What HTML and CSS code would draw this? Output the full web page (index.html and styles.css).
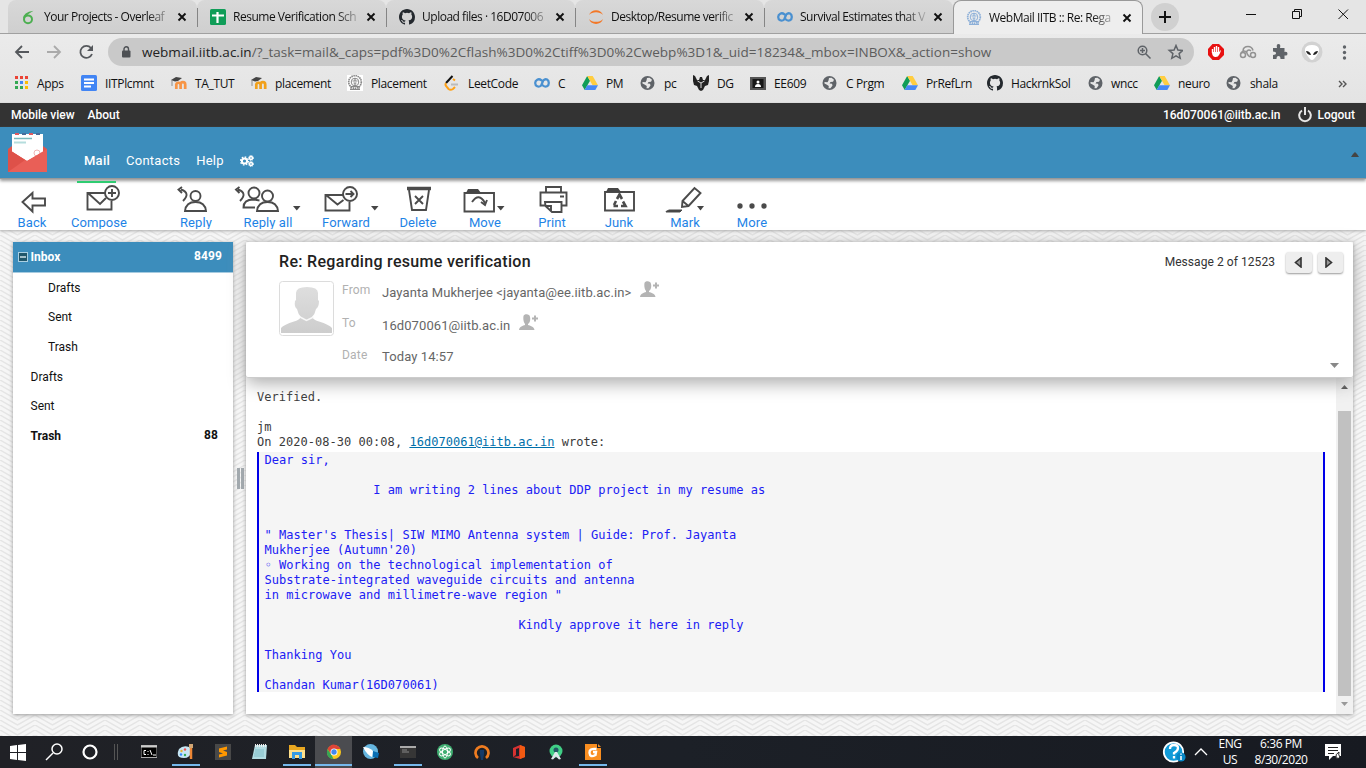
FILE: index.html
```html
<!DOCTYPE html>
<html lang="en">
<head>
<meta charset="utf-8">
<title>WebMail IITB :: Re: Regarding resume verification</title>
<link rel="stylesheet" href="styles.css">
</head>
<body>
<svg class="defs" width="0" height="0">
  <symbol id="close" viewBox="0 0 10 10"><path d="M1.500 1.500l7 7M8.500 1.500l-7 7" stroke="#111" stroke-width="1.900"/></symbol>
  <symbol id="github" viewBox="0 0 16 16"><path fill="#24292e" d="M8 0C3.580 0 0 3.580 0 8c0 3.540 2.290 6.530 5.470 7.590.4.070.55-.17.55-.38v-1.490c-2.010.37-2.530-.49-2.690-.94-.09-.23-.48-.94-.82-1.130-.28-.15-.68-.52-.01-.53.63-.01 1.080.58 1.230.82.72 1.210 1.870.87 2.330.66.070-.52.28-.87.51-1.070-1.780-.2-3.640-.89-3.640-3.950 0-.87.31-1.590.82-2.150-.08-.2-.36-1.020.08-2.120 0 0 .67-.21 2.200.82a7.600 7.600 0 0 1 4 0c1.530-1.040 2.200-.82 2.200-.82.44 1.100.16 1.920.08 2.120.51.56.82 1.270.82 2.150 0 3.070-1.870 3.750-3.650 3.950.29.25.54.73.54 1.480v2.200c0 .21.15.46.55.38A8 8 0 0 0 16 8c0-4.420-3.580-8-8-8z"/></symbol>
  <symbol id="loop" viewBox="0 0 16 10"><path d="M9 3.500L7.500 2.300C4.500 0 1.200 2 1.200 5s3.300 5 6 2.500l2-5C12-.3 14.800 2 14.800 5s-3 5-5.800 2.500L7.500 6.500" fill="none" stroke="#4a90d0" stroke-width="2.300"/></symbol>
  <symbol id="drive" viewBox="0 0 16 14"><path fill="#109d58" d="M5.200 0L0 9.200 2.700 14 8 4.700z"/><path fill="#ffcd40" d="M5.200 0h5.500L16 9.200h-5.400z"/><path fill="#4688f4" d="M5.300 9.200H16L13.300 14H2.600z"/></symbol>
  <symbol id="globe" viewBox="0 0 14 14"><circle cx="7" cy="7" r="7" fill="#5f6368"/><path d="M6.500 2L9 1.700l2.500 2-1 2-2.500.3-1 1.500 2.500.2.500 1.800-2 2.700H6l.3-2.200L4 8.500 2 7.500V6l3 .3L6 4.500z" fill="#e6e6e6"/></symbol>
  <symbol id="crest" viewBox="0 0 16 16"><g fill="none" stroke="currentColor"><circle cx="8" cy="7" r="6.300" stroke-width="1.700" stroke-dasharray="1.500 .6"/><circle cx="8" cy="7" r="3.800"/><path d="M8 3v3M5.500 6h5M6.500 8h3M8 8v4M3.500 11.500h9M3 14.500h10M4 12v3M12 12v3" stroke-width="1.200"/></g></symbol>
  <symbol id="moodle" viewBox="0 0 16 14"><path d="M5.300 13V8.500a2.200 2.200 0 0 1 4.300 0V13M9.600 8.500a2.200 2.200 0 0 1 4.600 0V13" fill="none" stroke="currentColor" stroke-width="2.700"/><path d="M0 4l5-3 6 1-4 3-3 .5z" fill="#444"/><path d="M1 4v6" stroke="#777" stroke-width=".8"/></symbol>
  <symbol id="person" viewBox="0 0 20 17"><g fill="#b4b4b4"><path d="M4.500 2C5-.5 11-.5 11 3c.8 3-.5 6-2 7v1c2 .7 6 1.500 6.500 5H0c.5-3.500 4-4.300 6-5v-1C4.500 8 4 5 4.500 2z"/><path d="M15 1.500h2v2h2v2h-2v2h-2v-2h-2v-2h2z"/></g></symbol>
</svg>

<header class="browser">
  <div class="tabs">
    <div class="tab"><svg width="16" height="16" viewBox="0 0 16 16"><ellipse cx="7" cy="10.300" rx="4" ry="3.900" fill="none" stroke="#4caf50" stroke-width="2"/><path d="M2.200 9.500Q2 3.500 12.500 1.800 7.500 4.500 4.500 8" fill="#4caf50"/></svg><span>Your Projects - Overleaf</span><svg width="10" height="10"><use href="#close"/></svg></div>
    <div class="tab"><svg width="16" height="16"><rect width="16" height="16" rx="1.500" fill="#109d58"/><path d="M7.500 3v11M2 6.500h12" stroke="#fff" stroke-width="2.200"/></svg><span>Resume Verification Sch</span><svg width="10" height="10"><use href="#close"/></svg></div>
    <div class="tab"><svg width="16" height="16"><use href="#github"/></svg><span>Upload files · 16D07006</span><svg width="10" height="10"><use href="#close"/></svg></div>
    <div class="tab"><svg width="16" height="16" viewBox="0 0 16 16"><path d="M1 6C3-.5 13-.5 15 6 12 2.200 4 2.200 1 6zM1 10c2 6.500 12 6.500 14 0-3 3.800-11 3.800-14 0z" fill="#f37726"/></svg><span>Desktop/Resume verific</span><svg width="10" height="10"><use href="#close"/></svg></div>
    <div class="tab"><svg width="16" height="10"><use href="#loop"/></svg><span>Survival Estimates that V</span><svg width="10" height="10"><use href="#close"/></svg></div>
    <div class="tab active"><svg class="blue-crest" width="16" height="16"><use href="#crest"/></svg><span>WebMail IITB :: Re: Rega</span><svg width="10" height="10"><use href="#close"/></svg></div>
    <div class="newtab"><svg width="12" height="12"><path d="M6 0v12M0 6h12" stroke="#111" stroke-width="2"/></svg></div>
    <svg class="winctl" width="106" height="20" viewBox="1246 5 106 20" fill="none" stroke="#111" stroke-width="1"><path d="M1246 14.500h10M1292.500 11.500h7v7h-7zM1294.500 11v-1.500h7v7h-2M1338.500 9.500l9.500 9.500M1348 9.500l-9.500 9.500"/></svg>
  </div>
  <div class="navbar">
    <svg width="86" height="20" viewBox="10 42 86 20" fill="none" stroke-width="1.800"><path d="M29 52H16M22 46l-6 6 6 6" stroke="#55585c"/><path d="M47 52h13M54 46l6 6-6 6" stroke="#aaa"/><path d="M91 48a6 6 0 1 0 1 6" stroke="#55585c"/><path d="M93 45v6h-6z" fill="#55585c"/></svg>
    <div class="url"><svg width="9" height="12" viewBox="0 0 9 12"><rect y="4.500" width="8.500" height="7" rx="1" fill="#4d5054"/><path d="M2 5V3a2.200 2.200 0 0 1 4.500 0v2" fill="none" stroke="#4d5054" stroke-width="1.400"/></svg>
      <span class="address"><b>webmail.iitb.ac.in</b>/?_task=mail&amp;_caps=pdf%3D0%2Cflash%3D0%2Ctiff%3D0%2Cwebp%3D1&amp;_uid=18234&amp;_mbox=INBOX&amp;_action=show</span>
      <svg width="46" height="16" viewBox="1137 44 46 16" fill="none" stroke="#5f6368" stroke-width="1.500"><circle cx="1142.500" cy="50.500" r="4.300"/><path d="M1145.500 53.500l5 5M1140 50.500h5M1142.500 48v5"/><path d="M1176 45.500l1.900 4.500 4.900.4-3.700 3.200 1.100 4.700-4.200-2.500-4.200 2.500 1.100-4.700-3.700-3.200 4.900-.4z"/></svg></div>
    <svg class="exts" width="148" height="24" viewBox="1206 40 148 24"><path d="M1212.500 44h6.500l5 5v6l-5 5h-6.500l-4.500-5v-6z" fill="#e81010"/><path d="M1212.500 53v-4M1214.500 52v-5M1216.500 52v-6M1218.500 52v-5" stroke="#fff" stroke-width="1.400"/><path d="M1212 52h7.300l1-2q1.200.5-1 4.500-1.300 3-4.300 2.500-3-.5-3-5z" fill="#fff"/><g fill="none" stroke="#929292" stroke-width="1.500"><circle cx="1243" cy="55" r="2.500"/><circle cx="1253" cy="55" r="2.500"/><path d="M1243 50.500q.5-4 5-4 4 0 5 4M1250 57q-4-3-3-6 2-2 4 0M1241 53q3-4 6 0"/></g><path d="M1273 48h4q-1-4 1.500-4t1.500 4h4.500v4q3-.7 3 1.700t-3 1.700V59h-4q0-3-2-3t-2 3h-3.500v-4q3 0 3-1.700t-3-1.700z" fill="#5f6368"/><circle cx="1312" cy="52" r="10.500" fill="#d2d2d2"/><path d="M1305 49q1-4 7-4t7 4q1 3-5 10-2 2-4 0-6-7-5-10z" fill="#fff"/><path d="M1306 51q4 0 5 4-4 0-5-4zM1318 51q-4 0-5 4 4 0 5-4z" fill="#222"/><g fill="#5f6368"><circle cx="1344.500" cy="47" r="1.700"/><circle cx="1344.500" cy="52.500" r="1.700"/><circle cx="1344.500" cy="58" r="1.700"/></g></svg>
  </div>
  <nav class="bookmarks">
    <a><svg width="14" height="14" viewBox="0 0 14 14"><path d="M0 1.500h3m2 0h3m2 0h3" stroke="#ea4335" stroke-width="3"/><path d="M0 6.500h3" stroke="#34a853" stroke-width="3"/><path d="M5 6.500h3" stroke="#4285f4" stroke-width="3"/><path d="M10 6.500h3" stroke="#fbbc05" stroke-width="3"/><path d="M0 11.500h3m2 0h3" stroke="#34a853" stroke-width="3"/><path d="M10 11.500h3" stroke="#fbbc05" stroke-width="3"/></svg><span>Apps</span></a>
    <a><svg width="16" height="16"><rect width="16" height="16" rx="1.500" fill="#4285f4"/><path d="M3 4.500h10M3 8h10M3 11.500h7" stroke="#fff" stroke-width="1.800"/></svg><span>IITPlcmnt</span></a>
    <a><svg class="orange" width="16" height="14"><use href="#moodle"/></svg><span>TA_TUT</span></a>
    <a><svg class="gold" width="16" height="14"><use href="#moodle"/></svg><span>placement</span></a>
    <a><svg class="grey-crest" width="16" height="16"><use href="#crest"/></svg><span>Placement</span></a>
    <a><svg width="16" height="16" viewBox="0 0 16 16" fill="none" stroke-width="2"><path d="M8.500 1L2 8" stroke="#111"/><path d="M2 8q-1 1.500 0 3l2.500 3q2 1.500 4.500 0l2-2M11 5.500L9 4" stroke="#ffa116"/><path d="M7 9.500h7" stroke="#bbb"/></svg><span>LeetCode</span></a>
    <a><svg width="16" height="10"><use href="#loop"/></svg><span>C</span></a>
    <a><svg width="16" height="14"><use href="#drive"/></svg><span>PM</span></a>
    <a class="wide"><svg width="15" height="14"><use href="#globe"/></svg><span>pc</span></a>
    <a><svg width="16" height="16"><path d="M0 0l2 1 2 4h2l1-3h2l1 3h2l2-4 2-1v6l-1 4-3 1-2 4-2 1-2-1-2-4-3-1-1-4z" fill="#222"/><path d="M4.500 6L8 8l3.500-2M8 8v5" stroke="#ddd" fill="none"/></svg><span>DG</span></a>
    <a><svg width="16" height="13"><rect width="16" height="13" fill="#555"/><rect x="2.500" y="2" width="11" height="9" fill="#171717"/><circle cx="8" cy="5" r="1.500" fill="#fff"/><path d="M5 10q0-3 3-3t3 3z" fill="#fff"/></svg><span>EE609</span></a>
    <a class="wide"><svg width="15" height="14"><use href="#globe"/></svg><span>C Prgm</span></a>
    <a><svg width="16" height="14"><use href="#drive"/></svg><span>PrRefLrn</span></a>
    <a><svg width="16" height="16"><use href="#github"/></svg><span>HackrnkSol</span></a>
    <a><svg width="15" height="14"><use href="#globe"/></svg><span>wncc</span></a>
    <a><svg width="16" height="14"><use href="#drive"/></svg><span>neuro</span></a>
    <a class="wide"><svg width="15" height="14"><use href="#globe"/></svg><span>shala</span></a>
    <svg class="more-marks" width="9" height="8" fill="none" stroke="#555" stroke-width="1.400"><path d="M1 1l3 3-3 3M5 1l3 3-3 3"/></svg>
  </nav>
</header>

<div class="topline"><a>Mobile view</a><a>About</a><a class="user">16d070061@iitb.ac.in</a><svg width="14" height="16" viewBox="0 0 14 16"><path d="M4 3.500a5.800 5.800 0 1 0 6 0" fill="none" stroke="#e5e5e5" stroke-width="2"/><path d="M7 0v8" stroke="#e5e5e5" stroke-width="2"/></svg><a>Logout</a></div>
<div class="mainbar">
  <svg class="logo" width="40" height="41" viewBox="8 132 40 41"><path d="M8 149l4-3h31l4 3v23H8z" fill="#e1564e"/><path d="M12 134h31v18l-16 9-15-9z" fill="#fff"/><path d="M15 134h4m10 0h4" stroke="#dc5b62" stroke-width="2"/><path d="M22 134h4m10 0h4" stroke="#476d9b" stroke-width="2"/><path d="M14 138.500h18" stroke="#77b9bc" stroke-width="1.500"/><path d="M14 142.500h12" stroke="#b5dddd" stroke-width="2"/><circle cx="37" cy="153" r="3" fill="none" stroke="#efb4b4"/><path d="M8 149l19 12 20-12v23H8z" fill="#e95f57"/><path d="M8 149l17 11-17 12z" fill="#de5149"/></svg>
  <a>Mail</a><a>Contacts</a><a>Help</a>
  <svg width="14" height="12" viewBox="0 0 14 12" fill="none" stroke="#fff"><circle cx="4.500" cy="6" r="2.600" stroke-width="2"/><circle cx="4.500" cy="6" r="4" stroke-dasharray="1.600 1.500" stroke-width="1.300"/><circle cx="11" cy="3" r="1.500" stroke-width="1.500"/><circle cx="11" cy="9" r="1.500" stroke-width="1.500"/><circle cx="11" cy="3" r="2.500" stroke-dasharray="1 1"/><circle cx="11" cy="9" r="2.500" stroke-dasharray="1 1"/></svg>
  <svg class="fold" width="8" height="5"><path d="M0 5l2-3 2-2 2 2 2 3z" fill="#444"/></svg>
</div>
<div class="toolbar">
  <a class="back"><svg width="64" height="32" viewBox="0 183 64 32"><path d="M22.500 202l10-9v5.500h12.500v7H32.500v6z"/></svg>Back</a>
  <a class="compose"><svg width="68" height="32" viewBox="65 183 68 32"><path d="M105 193H87.500v16.500h24V201M88 193l12 11 6-6"/><circle cx="112" cy="193" r="7"/><path d="M112 189v8M108 193h8"/></svg>Compose</a>
  <a><svg width="72" height="32" viewBox="160 183 72 32"><circle cx="195.500" cy="196" r="5"/><path d="M185 211q1-9 10.500-9t10.500 9z"/><path d="M183 201q8-8-2-11.500M182 187l-3.500 2.500 3.500 3.500"/></svg>Reply</a>
  <a><svg width="72" height="32" viewBox="232 183 72 32"><circle cx="254" cy="193" r="5.500"/><circle cx="267.500" cy="196" r="5.500"/><path d="M257 211q1-9 10.500-9t10.500 9zM255 207.500h-11.500q0-8 10-8l6 1"/><path d="M240 201q8-8-2-11.500M239.500 187l-3.500 2.500 3.500 3.500"/><path class="solid" d="M293 206h7.500l-3.700 4.500z"/></svg>Reply all</a>
  <a><svg width="84" height="32" viewBox="304 183 84 32"><path d="M343 195h-17.500v15.500h24V202M326 195l11.500 9.500 6-4.500"/><circle cx="350" cy="194" r="7"/><path d="M345.500 194h8M350.500 191l3 3-3 3"/><path class="solid" d="M371 206h7.500l-3.700 4.500z"/></svg>Forward</a>
  <a><svg width="60" height="32" viewBox="388 183 60 32"><path d="M409 190l3 20h14l3-20M415 196l8 8M423 196l-8 8"/><path d="M407 188.500h24" stroke-width="3.500"/></svg>Delete</a>
  <a><svg width="74" height="32" viewBox="448 183 74 32"><path d="M464.500 193h29.500v18.500h-29.500z"/><path class="solid" d="M466 193l2-4h10l3 4z"/><path d="M472 202q7-10 13 1M481 202l4 3 2-5"/><path class="solid" d="M497 206h7.500l-3.700 4.500z"/></svg>Move</a>
  <a><svg width="60" height="32" viewBox="522 183 60 32"><path d="M546 191.500V187h15v4.500M545 205.500h-4.500v-13h26v13H562M545 202h16.500v10H552l-6.500-6zM551 211v-5h-5M560 196.500h4"/></svg>Print</a>
  <a><svg width="74" height="32" viewBox="582 183 74 32"><path d="M605 192h29v18.500h-29z"/><path class="solid" d="M606 192l2-4h10l3 4z"/><path d="M617 199l2.500-4.500 2.500 4.500M614 205l2-4M613.500 206h4.500M621 206h4.500l-2.500-4.500" stroke-width="2.600"/></svg>Junk</a>
  <a><svg width="58" height="32" viewBox="656 183 58 32"><path d="M682.500 201l12-13 6 5-12 13-6.500 1zM682.500 201l6 5"/><path d="M666 211.500l3-1.500h13l-2 2h-14z" fill="#454545" stroke-width="1"/><path class="solid" d="M697 206h7l-3.500 4.500z"/></svg>Mark</a>
  <a><svg width="76" height="32" viewBox="714 183 76 32"><g class="solid"><circle cx="740" cy="206" r="1.700"/><circle cx="752" cy="206" r="1.700"/><circle cx="764" cy="206" r="1.700"/></g></svg>More</a>
</div>

<main>
  <aside>
    <div class="folder selected"><svg width="10" height="10"><rect x=".5" y=".5" width="9" height="9" fill="#20566a" stroke="#a9cfe2"/><path d="M2 5h6" stroke="#cfe3ea" stroke-width="1.500"/></svg><span>Inbox</span><em>8499</em></div>
    <div class="folder sub">Drafts</div><div class="folder sub">Sent</div><div class="folder sub">Trash</div>
    <div class="folder">Drafts</div><div class="folder">Sent</div><div class="folder unread"><span>Trash</span><em>88</em></div>
  </aside>
  <div class="splitter"><i></i><i></i></div>
  <section class="message">
    <div class="msghead">
      <div class="subject"><h1>Re: Regarding resume verification</h1><span>Message 2 of 12523</span>
        <button><svg width="8" height="11"><path d="M7 1v9L1.500 5.500z" fill="#999" stroke="#333" stroke-width="1.600"/></svg></button><button><svg width="8" height="11"><path d="M1 1v9l5.500-4.500z" fill="#999" stroke="#333" stroke-width="1.600"/></svg></button></div>
      <div class="info">
        <svg width="55" height="55" viewBox="0 0 55 55"><defs><linearGradient id="g" x2="0" y2="1"><stop stop-color="#dedede"/><stop offset="1" stop-color="#cdcdcd"/></linearGradient></defs><rect x=".5" y=".5" width="54" height="54" rx="3" fill="#fff" stroke="#dcdcdc"/><path d="M17 12q0-6 11-6t11 6v7l1 1q0 6-3 8-1 5-4 8 2 3 7 4.500 10 3 13 6.500v5H2v-5q3-3.500 13-6.500 5-1.500 7-4.500-3-3-4-8-3-2-2-8l1-1z" fill="url(#g)"/><path d="M21 36l6.500 3.500 7-3.500" fill="none" stroke="#f8f8f8" stroke-width="1.500"/></svg>
        <dl><dt>From</dt><dd>Jayanta Mukherjee &lt;jayanta@ee.iitb.ac.in&gt;<svg width="20" height="17"><use href="#person"/></svg></dd>
        <dt>To</dt><dd>16d070061@iitb.ac.in<svg width="20" height="17"><use href="#person"/></svg></dd>
        <dt>Date</dt><dd>Today 14:57</dd></dl>
        <svg class="expand" width="9" height="5"><path d="M0 0h9L4.500 5z" fill="#888"/></svg>
      </div>
    </div>
    <div class="body"><div class="content"><pre>Verified.

jm
On 2020-08-30 00:08, <a>16d070061@iitb.ac.in</a> wrote:</pre>
<blockquote><pre>Dear sir,

               I am writing 2 lines about DDP project in my resume as


" Master's Thesis| SIW MIMO Antenna system | Guide: Prof. Jayanta
Mukherjee (Autumn'20)
◦ Working on the technological implementation of
Substrate-integrated waveguide circuits and antenna
in microwave and millimetre-wave region "

                                   Kindly approve it here in reply

Thanking You

Chandan Kumar(16D070061)</pre></blockquote></div>
    <div class="scroll"><svg width="7" height="4"><path d="M0 4h7L3.500 0z" fill="#444"/></svg><div class="thumb"></div><svg width="7" height="4"><path d="M0 0h7L3.500 4z" fill="#999"/></svg></div></div>
  </section>
</main>

<footer class="taskbar">
  <svg width="120" height="32" viewBox="0 736 120 32"><path d="M10 746l7-1v7h-7zM18 745l8-1v8h-8zM10 753h7v7l-7-1zM18 753h8v8l-8-1z" fill="#fff"/><g fill="none" stroke="#fff"><circle cx="57" cy="749" r="5" stroke-width="1.500"/><path d="M53 753l-7 7" stroke-width="1.500"/><circle cx="90" cy="752" r="6.500" stroke-width="2.200"/></g><path d="M114.500 744v16M117.500 744v16" stroke="#555"/></svg>
  <div class="apps">
    <i><svg width="16" height="16"><rect y="1.500" width="16" height="12" fill="#000" stroke="#aaa"/><path d="M0 2.500h16" stroke="#ccc" stroke-width="2"/><path d="M5 6.500H3v4h2M7 7v1M7 10v1M9 6l2 5M12 11h3" stroke="#fff" fill="none"/></svg></i>
    <i class="open"><svg width="18" height="16"><path d="M2 5q4-4 10-2 3 1 2 5-1 6-7 6Q-2 14 2 5z" fill="#c7e7f5"/><circle cx="4.500" cy="7" r="1.200" fill="#e8b434"/><circle cx="8" cy="5.500" r="1.200" fill="#e55"/><circle cx="4" cy="10.500" r="1.200" fill="#38f"/><circle cx="8" cy="11" r="1.200" fill="#3a5"/><path d="M14 3v12" stroke="#ed8635" stroke-width="2.500"/><path d="M12 0h4v4h-4z" fill="#d1a675"/></svg></i>
    <i><svg width="16" height="16"><rect width="16" height="16" fill="#484848"/><path d="M4 4.500l8-2v3L8 6.500l4 1.500v3.500l-8 2v-3l4-1-4-1.500z" fill="#ff9800"/></svg></i>
    <i><svg width="16" height="16"><path d="M3 1h12l-1 14H0z" fill="#b2dce2"/><path d="M3 1.500h12" stroke="#eee" stroke-width="3" stroke-dasharray="1 1"/><path d="M3 6h9M3 8h9M2 10h10M2 12h10" stroke="#80bec8"/></svg></i>
    <i class="open"><svg width="16" height="16"><path d="M0 1h6l2 2h8v11H0z" fill="#e9a720"/><path d="M0 6h16v8H0z" fill="#ffe08b"/><path d="M3 15V8h10v7h-3v-4H6v4z" fill="#369be3"/></svg></i>
    <i class="open current"><svg width="16" height="16" viewBox="0 0 16 16"><circle cx="8" cy="8" r="7" fill="#fbc91c"/><path d="M1.500 5Q5-1 10 1q3 1 4.500 4H8L5 10z" fill="#df4437"/><path d="M1.500 5L5.500 11l2 4Q-1 14 1.500 5z" fill="#36a655"/><circle cx="8" cy="8" r="3.500" fill="#fff"/><circle cx="8" cy="8" r="2.700" fill="#4287ed"/></svg></i>
    <i><svg width="16" height="16"><circle cx="7.500" cy="7.500" r="7.500" fill="#65b5df"/><path d="M0 3q6 0 10 4l-1 6q-5-2-9-10z" fill="#fff"/><path d="M10 7l6 2-1 5-5-1z" fill="#086eb3"/></svg></i>
    <i class="open"><svg width="16" height="12"><rect width="16" height="12" fill="#363636"/><path d="M0 1h16" stroke="#aaa" stroke-width="2"/><path d="M2 4h5M2 6h7" stroke="#888"/></svg></i>
    <i><svg width="16" height="16"><circle cx="8" cy="8" r="8" fill="#3fae71"/><g fill="none" stroke="#fff"><ellipse cx="8" cy="8" rx="2.500" ry="6"/><ellipse cx="8" cy="8" rx="2.500" ry="6" transform="rotate(60 8 8)"/><ellipse cx="8" cy="8" rx="2.500" ry="6" transform="rotate(120 8 8)"/></g></svg></i>
    <i><svg width="16" height="16"><path d="M4 14a6.500 6.500 0 1 1 8 0" fill="none" stroke="#ef7c20" stroke-width="2.700"/><path d="M6 6h4v4l-1 6H7l-1-6z" fill="#153a69"/></svg></i>
    <i><svg width="14" height="16"><path d="M1 4l7-3 5 2v10l-5 2-7-2 6-1V4L4 5v6l-3 2z" fill="#d83232"/><path d="M8 1l5 2v10l-5 2z" fill="#f25a12"/></svg></i>
    <i><svg width="14" height="16"><circle cx="7" cy="7" r="6.500" fill="#40cf86"/><circle cx="7" cy="6" r="2.500" fill="#245766"/><path d="M2 15l4-7h2l4 7-2 .5-3-3-3 3z" fill="#dce7ea"/></svg></i>
    <i class="open"><svg width="16" height="16"><path d="M0 0h12v4h4v12H0z" fill="#f98e20"/><path d="M13 0l3 3h-3z" fill="#f98e20"/><path d="M11.500 5Q4 4 4.500 9t6 2l.5-3H8" fill="none" stroke="#fff" stroke-width="2.400"/></svg></i>
  </div>
  <svg class="tray" width="48" height="24" viewBox="1162 740 48 24"><circle cx="1173.500" cy="752" r="9.700" fill="#119bd8" stroke="#fff" stroke-width="1.800"/><path d="M1170 749q0-4 4-4t4 3-4 5v1.500M1174 756v2.500" fill="none" stroke="#fff" stroke-width="2.300"/><circle cx="1181" cy="757" r="4.600" fill="#0786c5"/><path d="M1181 753.500v1.300M1181 756v4" stroke="#fff" stroke-width="1.500"/><path d="M1195 755l6-6 6 6" fill="none" stroke="#fff" stroke-width="1.300"/></svg>
  <div class="lang">ENG<br>US</div><div class="clock">6:36 PM<br>8/30/2020</div>
  <svg class="notice" width="17" height="17"><path d="M0 0h16v12H8l-4 4v-4H0z" fill="#fff"/><path d="M3 3.500h10M3 6.500h10M3 9.500h6" stroke="#222"/><path d="M14 8q-4 2-3 6 3 1 4-1-2-2-1-5z" fill="#fff" stroke="#222"/></svg>
</footer>
</body>
</html>
```
FILE: styles.css
```css
* { box-sizing: border-box; }
body { margin: 0; width: 1366px; height: 768px; overflow: hidden; display: flex; flex-direction: column; font-family: Roboto, sans-serif; font-size: 12px; color: #111; }
.defs { position: absolute; }
svg { flex: none; display: block; }
a { color: inherit; white-space: nowrap; }

/* Browser frame */
.browser { height: 103px; flex: none; background: linear-gradient(#eeeeee, #e4e4e4); font-family: "Open Sans", "Noto Sans", sans-serif; border-bottom: 1px solid #ddd; }
.tabs { height: 34px; display: flex; padding-left: 8px; background: #e5e5e5; border-bottom: 1px solid #a0a0a0; }
.tab { width: 189px; height: 33px; display: flex; align-items: center; padding: 0 10px 0 13px; background: linear-gradient(#d8d8d8, #cfcfcf); border-radius: 8px 8px 0 0; position: relative; }
.tab:not(.active)::after { content: ""; width: 1px; height: 19px; background: #858585; position: absolute; right: -1px; top: 8px; z-index: 1; }
.tab:nth-child(5)::after { display: none; }
.tab span { width: 128px; margin: 0 0 0 7px; white-space: nowrap; font-size: 12px; letter-spacing: -.48px; -webkit-mask-image: linear-gradient(90deg, #000 103px, #0003 125px); mask-image: linear-gradient(90deg, #000 103px, #0003 125px); }
.tab > svg:last-child { margin-left: auto; }
.tab.active { width: 190px; height: 34px; background: #eee; border: 1px solid #999; border-bottom: 0; padding: 0 10px 0 12px; }
.blue-crest { color: #8cafd8; }
.grey-crest { color: #888; background: #fff; }
.newtab { width: 28px; height: 28px; border-radius: 50%; background: #d0d0d0; margin: 3px 0 0 8px; display: grid; place-items: center; }
.winctl { margin: 5px 0 0 67px; }
.navbar { height: 36px; display: flex; align-items: center; padding: 0 12px 0 10px; }
.url { width: 1086px; height: 28px; margin-left: 12px; border-radius: 14px; background: #c9c9c9; display: flex; align-items: center; padding: 0 11px 0 14px; }
.address { margin-left: 11px; font-size: 13.5px; letter-spacing: .02px; color: #5c5c5c; white-space: nowrap; }
.address b { font-weight: 400; color: #222; }
.url > svg:last-child { margin-left: auto; }
.exts { margin-left: auto; }
.bookmarks { height: 28px; padding-left: 15px; display: grid; grid-template-columns: 66px 90px 80px 96px 97px 90px 48px 58px 53px 57px 72px 80px 85px 101px 66px 72px 112px 12px; align-items: center; }
.bookmarks a { display: flex; align-items: center; gap: 8px; letter-spacing: -.35px; position: relative; top: -1px; }
.bookmarks a.wide { gap: 9px; }
.orange { color: #f79546; }
.gold { color: #f1a11c; }

/* Mail application bars */
.topline { height: 24px; flex: none; background: #333; color: #fff; display: flex; align-items: center; padding: 0 11px; gap: 13px; font-weight: 500; font-size: 12px; letter-spacing: -.03px; }
.topline .user { margin-left: auto; }
.topline svg { margin-left: 5px; margin-right: -8px; }
.topline a:last-child { letter-spacing: 0; }
.mainbar { height: 52px; flex: none; background: #3c8dbc; border-bottom: 1px solid #999; box-shadow: 0 2px 3px #999; display: flex; color: #fff; font-size: 13px; letter-spacing: .25px; padding: 5px 7px 0 8px; position: relative; z-index: 1; }
.logo { margin-right: 36px; }
.mainbar a { margin-right: 16px; padding-top: 21px; }
.mainbar a:first-of-type { font-weight: 500; }
.mainbar > svg:nth-last-child(2) { margin-top: 23px; }
.mainbar .fold { margin: 20px 0 0 auto; }
.toolbar { height: 51px; flex: none; display: grid; grid-template-columns: 65px 95px 72px 72px 84px 60px 74px 60px 74px 58px 76px; background: #fff; box-shadow: 0 1px 3px #aaa; color: #1e83e6; font-size: 13px; letter-spacing: .08px; padding-top: 4px; position: relative; }
.toolbar a { text-align: center; line-height: 15px; height: 46px; overflow: hidden; }
.toolbar .compose { width: 68px; }
.toolbar .back { width: 64px; }
.toolbar::before { content: ""; position: absolute; width: 39px; height: 2px; left: 77px; top: 0; background: #2ecc71; }
.toolbar svg { fill: none; stroke: #4b4b4b; stroke-width: 1.900; }
.toolbar .solid { fill: #454545; }
.toolbar path.solid { stroke: none; }
.toolbar::before { top: 2px; z-index: 2; }

/* Content */
main { height: 506px; display: flex; padding: 12px 13px 22px; background: #f6f6f6 url("data:image/svg+xml,%3Csvg xmlns='http://www.w3.org/2000/svg' width='35' height='5'%3E%3Cpath d='M0 -15l17.500 10L35 -15M0 -10l17.500 10L35 -10M0 -5l17.500 10L35 -5M0 0l17.500 10L35 0' fill='none' stroke='%23e5e5e5' stroke-width='1.500'/%3E%3C/svg%3E"); }
aside, .message { background: #fff; box-shadow: 0 1px 4px #999; }
aside { width: 220px; }
.folder { height: 29.600px; display: flex; align-items: center; padding: 0 15px 0 17.500px; }
.folder.sub { padding-left: 35px; }
.folder.selected { height: 31px; padding: 0 11px 0 5px; background: #3c8dbc; color: #fff; font-weight: 700; border-bottom: 1px solid #a6cbe0; }
.folder.selected svg { margin-right: 2.500px; }
.folder em { margin-left: auto; font-style: normal; font-weight: 700; letter-spacing: .12px; position: relative; top: -1px; }
.unread { font-weight: 700; }
.splitter { width: 13px; display: flex; gap: 1px; justify-content: center; align-items: center; padding-left: 2px; }
.splitter i { width: 3px; height: 21px; background: #a2a9ae; }
.message { width: 1107px; display: flex; flex-direction: column; }
.msghead { height: 136px; flex: none; background: #fff; box-shadow: 0 5px 18px #aaa; border-bottom: 1px solid #ccc; border-radius: 3px; padding: 8px 10px 0 33px; position: relative; z-index: 1; }
.subject { height: 31px; display: flex; align-items: flex-start; }
h1 { margin: 1px auto 0 0; font-size: 16px; line-height: 21px; font-weight: 500; letter-spacing: .31px; color: #222; }
.subject span { line-height: 24px; color: #333; letter-spacing: .06px; margin-right: 11px; }
button { width: 26px; height: 21px; padding: 0 2px 0 0; margin-top: 2px; border: 0; border-radius: 3px; background: #eee; box-shadow: 0 1px 2px #999; display: grid; place-items: center; }
button + button { margin-left: 6px; width: 25px; padding-right: 3px; }
.info { display: flex; }
dl { margin: 0; display: grid; grid-template-columns: 40px auto; padding-left: 8px; grid-template-rows: 33px 32px 30px; align-content: start; }
dt { color: #b1b1b1; line-height: 19px; letter-spacing: .2px; }
dd { margin: 0; font-size: 13px; line-height: 23px; letter-spacing: .09px; color: #666; display: flex; gap: 9px; }
dd:last-child { line-height: 21px; }
.info .expand { margin: 82px 4px 0 auto; }
.body { flex: 1; display: flex; min-height: 0; }
.content { flex: 1; padding: 12px 11px 0; }
pre { margin: 0; font-family: "DejaVu Sans Mono", monospace; font-size: 12px; line-height: 15px; letter-spacing: .032px; color: #3a3a3a; }
pre a { color: #0070aa; text-decoration: underline; }
blockquote { margin: 2px 0 0; padding: 1px 0 0 5.500px; height: 240px; border: solid #0000e8; border-width: 0 2px; background: #f5f5f5; }
blockquote pre { color: #2020f4; }
.scroll { width: 17px; background: #f1f1f1; display: flex; flex-direction: column; align-items: center; justify-content: space-between; padding: 7px 0 8px; }
.thumb { width: 13px; height: 285px; background: #c1c1c1; margin-top: 15px; }

/* Desktop taskbar */
.taskbar { height: 32px; background: linear-gradient(90deg, #202126, #1c2027 50%, #171a21); display: flex; align-items: center; color: #fff; font-family: "Open Sans", sans-serif; padding-right: 4px; }
.apps { display: flex; margin-left: 10px; }
.apps i { width: 37px; height: 32px; display: grid; place-items: center; position: relative; }
.open::after { content: ""; position: absolute; bottom: 2px; left: 5px; right: 4px; height: 2px; background: #76b9ed; }
.current { background: #4b4c50; }
.current::after { left: 0; right: 0; }
.tray { margin-left: auto; }
.lang, .clock { text-align: center; line-height: 16px; letter-spacing: -.42px; }
.lang { width: 40px; }
.clock { width: 62px; }
.notice { margin: 0 20px 0 13px; }
```
